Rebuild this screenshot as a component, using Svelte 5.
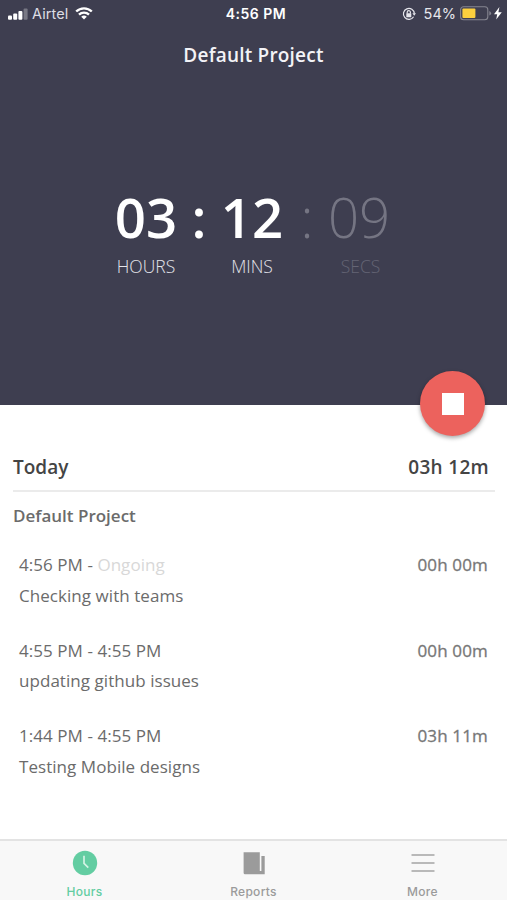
<script lang="ts">
  type Entry = {
    start: string
    end?: string
    note: string
    duration: string
  }

  const project = 'Default Project'
  const entries: Entry[] = [
    { start: '4:56 PM', note: 'Checking with teams', duration: '00h 00m' },
    { start: '4:55 PM', end: '4:55 PM', note: 'updating github issues', duration: '00h 00m' },
    { start: '1:44 PM', end: '4:55 PM', note: 'Testing Mobile designs', duration: '03h 11m' },
  ]

  let tab = $state('Hours')
</script>

<div class="app">
  <header>
    <div class="status">
      <div class="carrier">
        <svg class="signal" width="20" height="12" viewBox="0 0 20 12" fill="#fff">
          <rect x="0" y="7.5" width="4" height="4.2" rx="1" />
          <rect x="5.2" y="5.5" width="4" height="6.2" rx="1" />
          <rect x="10.4" y="3" width="4" height="8.7" rx="1" />
          <rect x="15.6" y="0.5" width="4" height="11.2" rx="1" opacity="0.3" />
        </svg>
        <span class="name">Airtel</span>
        <svg width="18" height="13" viewBox="0 0 18 13" fill="none" stroke="#fff" stroke-width="2.4">
          <path d="M1.2 4.5a11.2 11.2 0 0 1 15.6 0" />
          <path d="M4 7.6a7.2 7.2 0 0 1 10 0" />
          <path d="M9 12.5 6.2 9.8a4 4 0 0 1 5.6 0z" fill="#fff" stroke="none" />
        </svg>
      </div>
      <div class="clock">4:56 PM</div>
      <div class="power">
        <svg class="lock" width="14" height="14" viewBox="0 0 14 14" fill="none" stroke="#e6e6ec" stroke-width="1.2">
          <path d="M11.6 9.8a5.5 5.5 0 1 1 .8-3.2" />
          <path d="M10.4 6.2h3.6l-1.8 2.5z" fill="#e6e6ec" stroke="none" />
          <rect x="4.3" y="6.3" width="5" height="3.9" rx="0.5" fill="#e6e6ec" stroke="none" />
          <path d="M5.2 6.5V5.3a1.6 1.6 0 0 1 3.2 0v1.2" />
        </svg>
        <span class="percent">54%</span>
        <svg class="battery" width="32" height="15" viewBox="0 0 32 15">
          <rect x="0.6" y="0.8" width="27.2" height="13" rx="3" fill="none" stroke="#858590" stroke-width="1.1" />
          <rect x="2.4" y="2.6" width="13" height="9.4" rx="1" fill="#fbcf3e" />
          <path d="M29.3 5v4.6q1.8-.7 1.8-2.3T29.3 5z" fill="#858590" />
        </svg>
        <svg width="8" height="13" viewBox="0 0 8 13" fill="#fff">
          <path d="M5.4 0 0 7.2h3.2L2.2 12.6 7.8 5.2H4.4z" />
        </svg>
      </div>
    </div>

    <h1>{project}</h1>

    <div class="timer">
      <span class="digits">03</span>
      <span class="digits">:</span>
      <span class="digits">12</span>
      <span class="digits thin">:</span>
      <span class="digits thin">09</span>
      <span class="unit">HOURS</span>
      <span></span>
      <span class="unit">MINS</span>
      <span></span>
      <span class="unit faint">SECS</span>
    </div>

    <button class="stop" aria-label="Stop timer"><span></span></button>
  </header>

  <main>
    <div class="day">
      <span>Today</span>
      <span class="total">03h 12m</span>
    </div>
    <h2>{project}</h2>
    <ul>
      {#each entries as entry}
        <li>
          <div class="time">
            <span>
              {entry.start} - {#if entry.end}{entry.end}{:else}<span class="ongoing">Ongoing</span>{/if}
            </span>
            <span class="duration">{entry.duration}</span>
          </div>
          <div class="note">{entry.note}</div>
        </li>
      {/each}
    </ul>
  </main>

  <nav>
    <button class:active={tab === 'Hours'} onclick={() => (tab = 'Hours')}>
      <svg width="26" height="26" viewBox="0 0 26 26">
        <circle cx="13" cy="13" r="12.2" fill="currentColor" />
        <path d="M12 5.8v7.6l4.3 4.3" fill="none" stroke="#d3f3e4" stroke-width="1.7" />
      </svg>
      <span>Hours</span>
    </button>
    <button class:active={tab === 'Reports'} onclick={() => (tab = 'Reports')}>
      <svg width="26" height="26" viewBox="0 0 26 26" fill="currentColor">
        <path d="M2.6 2.2h16.2v18.9h1.6V6h3.3v18.2H4.1q-1.5 0-1.5-1.5z" />
      </svg>
      <span>Reports</span>
    </button>
    <button class:active={tab === 'More'} onclick={() => (tab = 'More')}>
      <svg width="26" height="26" viewBox="0 0 26 26" stroke="#b9b9b9" stroke-width="1.8">
        <path d="M1.5 5h23M1.5 13h23M1.5 21h23" />
      </svg>
      <span>More</span>
    </button>
  </nav>
</div>

<style>
  :global(body) {
    margin: 0;
  }
  .app {
    box-sizing: border-box;
    width: 507px;
    height: 900px;
    display: flex;
    flex-direction: column;
    overflow: hidden;
    background: #fff;
    color: #6b6b6b;
    font-family: 'Open Sans', 'Noto Sans', sans-serif;
  }
  svg {
    display: block;
    flex: none;
  }
  button {
    padding: 0;
    border: 0;
    background: none;
    font: inherit;
  }
  header {
    position: relative;
    flex: none;
    height: 405px;
    background: #3e3e50;
    color: #fff;
  }
  .status {
    display: grid;
    grid-template-columns: 1fr auto 1fr;
    align-items: center;
    height: 27px;
    padding: 0 5px 0 8px;
    font-family: Inter, sans-serif;
    font-size: 14.5px;
    line-height: 27px;
  }
  .carrier,
  .power {
    display: flex;
    align-items: center;
  }
  .power {
    justify-content: flex-end;
  }
  .name {
    margin: 0 7px 0 4px;
    color: #dddde4;
    letter-spacing: 0.1px;
  }
  .clock {
    padding-left: 2px;
    font-size: 14px;
    font-weight: 600;
    letter-spacing: 0.5px;
  }
  .percent {
    margin: 0 4px 0 8px;
    color: #e6e6ec;
    font-size: 14.5px;
  }
  .battery {
    margin-right: 2px;
  }
  h1 {
    margin: 13px 0 0;
    font-size: 19px;
    line-height: 30px;
    font-weight: 600;
    letter-spacing: 0.2px;
    text-align: center;
    color: #f3f3f7;
  }
  .timer {
    display: grid;
    grid-template-columns: 64px 42px 64px 46px 58px;
    justify-items: center;
    margin: 109px 0 0 114px;
  }
  .digits {
    font-size: 54.5px;
    line-height: 76px;
    font-weight: 600;
  }
  .thin {
    font-weight: 300;
    color: #757583;
  }
  .unit {
    font-size: 17.5px;
    line-height: 22px;
    font-weight: 300;
    color: #e4e4ea;
  }
  .faint {
    padding-left: 3px;
    color: #656575;
  }
  .stop {
    position: absolute;
    right: 22px;
    bottom: -31px;
    display: grid;
    place-items: center;
    width: 65px;
    height: 65px;
    border-radius: 50%;
    background: #ec625d;
    box-shadow: 0 2px 4px rgba(0, 0, 0, 0.35);
    span {
      width: 22px;
      height: 22px;
      background: #fff;
    }
  }
  main {
    flex: 1;
    padding: 43px 12px 0 13px;
  }
  .day {
    display: flex;
    justify-content: space-between;
    padding: 4px 6px 8px 0;
    border-bottom: 2px solid #ebebeb;
    font-size: 19px;
    line-height: 30px;
    font-weight: 600;
    color: #444;
  }
  .total {
    letter-spacing: 0.3px;
  }
  h2 {
    margin: 11px 0 21px;
    font-size: 17px;
    line-height: 26px;
    font-weight: 600;
    color: #6b6b6b;
  }
  ul {
    display: grid;
    gap: 24.5px;
    margin: 0;
    padding: 0 7px 0 6px;
    list-style: none;
  }
  li {
    font-size: 17px;
    line-height: 30.5px;
    letter-spacing: 0.05px;
  }
  .time {
    display: flex;
    justify-content: space-between;
  }
  .ongoing {
    color: #d8d8d8;
  }
  .duration {
    letter-spacing: 0.15px;
    color: #777;
    -webkit-text-stroke: 0.3px #777;
  }
  nav {
    box-sizing: border-box;
    flex: none;
    display: grid;
    grid-template-columns: repeat(3, 1fr);
    height: 61px;
    border-top: 2px solid #e3e3e3;
    background: #f8f8f8;
    button {
      display: flex;
      flex-direction: column;
      align-items: center;
      padding-top: 9px;
      color: #9b9b9b;
    }
    span {
      margin-top: 7px;
      font: 500 12px/18px Inter, sans-serif;
      letter-spacing: 0.3px;
    }
    .active {
      color: #63cda2;
    }
  }
</style>
